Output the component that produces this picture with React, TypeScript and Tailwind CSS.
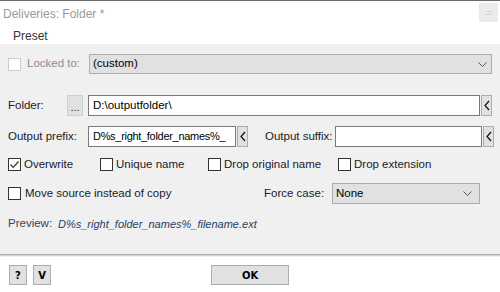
import React from "react";

const font = { fontFamily: '"Liberation Sans", Arial, sans-serif' };

function Chevron({ className = "" }: { className?: string }) {
  return (
    <svg width="9" height="5" viewBox="0 0 9 5" className={className}>
      <path d="M0.5 0.5 L4.5 4.5 L8.5 0.5" fill="none" stroke="#555" strokeWidth="1" />
    </svg>
  );
}

function LeftBtn() {
  return (
    <div className="w-[11px] h-[21px] ml-px shrink-0 bg-[#e1e1e1] border border-[#adadad] flex items-center justify-center">
      <svg width="6" height="11" viewBox="0 0 6 11">
        <path d="M5 1 L1 5.5 L5 10" fill="none" stroke="#111" strokeWidth="1.2" />
      </svg>
    </div>
  );
}

function Check({ checked = false, disabled = false }: { checked?: boolean; disabled?: boolean }) {
  return (
    <div
      className={`w-[13px] h-[13px] bg-white border flex items-center justify-center shrink-0 ${
        disabled ? "border-[#cccccc]" : "border-[#333333]"
      }`}
    >
      {checked && (
        <svg width="11" height="11" viewBox="0 0 11 11">
          <path d="M1.5 5.5 L4.2 8.3 L9.5 2.5" fill="none" stroke="#333" strokeWidth="1.2" />
        </svg>
      )}
    </div>
  );
}

export default function App() {
  return (
    <div className="w-[500px] h-[292px] bg-white border-t border-[#6b6b6b] text-[11.5px] text-[#1a1a2a] overflow-hidden flex flex-col whitespace-nowrap" style={font}>
      {/* title bar */}
      <div className="h-[26px] flex items-start justify-between">
        <span className="pl-[3px] pt-[4px] text-[#9a9a9a] text-[12px]">Deliveries: Folder *</span>
        <div className="mt-[2px] mr-[2px] w-[19px] h-[19px] bg-[#ebebeb] flex items-center justify-center">
          <div className="w-[7px] h-[4px] border-t border-b border-[#d8d8d8]" />
        </div>
      </div>

      {/* menu */}
      <div className="h-[17px] pl-[13px] flex items-start">
        <span className="text-[#333] text-[12px]">Preset</span>
      </div>

      {/* panel */}
      <div className="h-[210px] bg-[#f0f0f0] px-[8px] pt-[10px] flex flex-col">
        <div className="h-[20px] flex items-center">
          <Check disabled />
          <span className="ml-[6px] text-[#8d8d8d]">Locked to:</span>
          <div className="ml-auto w-[403px] h-[20px] bg-[#e1e1e1] border border-[#adadad] flex items-center pl-[3px] pr-[4px]">
            <span className="text-black">(custom)</span>
            <Chevron className="ml-auto" />
          </div>
        </div>

        <div className="h-[21px] mt-[21px] flex items-center">
          <span className="w-[59px] shrink-0">Folder:</span>
          <div className="w-[16px] h-[21px] shrink-0 bg-[#e1e1e1] border border-[#cfcfcf] flex items-end justify-center pb-[2px] text-[11px] leading-none text-[#333]">...</div>
          <div className="ml-[5px] w-[392px] h-[21px] shrink-0 bg-white border border-[#7a7a7a] flex items-center pl-[4px] text-black">D:\outputfolder\</div>
          <LeftBtn />
        </div>

        <div className="h-[21px] mt-[10px] flex items-center">
          <span className="w-[80px] shrink-0">Output prefix:</span>
          <div className="w-[148px] h-[21px] shrink-0 bg-white border border-[#7a7a7a] flex items-center pl-[4px] text-black text-[11px] tracking-[-0.3px]">D%s_right_folder_names%_</div>
          <LeftBtn />
          <span className="ml-[17px] w-[70px] shrink-0">Output suffix:</span>
          <div className="w-[147px] h-[21px] shrink-0 bg-white border border-[#7a7a7a]" />
          <LeftBtn />
        </div>

        <div className="h-[13px] mt-[11px] flex items-center">
          <div className="w-[92px] shrink-0 flex items-center">
            <Check checked />
            <span className="ml-[3px]">Overwrite</span>
          </div>
          <div className="w-[108px] shrink-0 flex items-center">
            <Check />
            <span className="ml-[3px]">Unique name</span>
          </div>
          <div className="w-[130px] shrink-0 flex items-center">
            <Check />
            <span className="ml-[3px]">Drop original name</span>
          </div>
          <div className="flex items-center">
            <Check />
            <span className="ml-[3px]">Drop extension</span>
          </div>
        </div>

        <div className="h-[21px] mt-[12px] flex items-center">
          <div className="w-[256px] shrink-0 flex items-center">
            <Check />
            <span className="ml-[4px]">Move source instead of copy</span>
          </div>
          <span className="w-[68px] shrink-0">Force case:</span>
          <div className="w-[148px] h-[21px] shrink-0 bg-[#e1e1e1] border border-[#adadad] flex items-center pl-[3px] pr-[7px]">
            <span className="text-black">None</span>
            <Chevron className="ml-auto" />
          </div>
        </div>

        <div className="mt-[12px] h-[16px] flex items-center">
          <span className="w-[50px] shrink-0 text-[#3a4450]">Preview:</span>
          <span className="italic text-[#1f3f66] text-[11px]">D%s_right_folder_names%_filename.ext</span>
        </div>
      </div>

      {/* shadow */}
      <div className="h-[3px] bg-gradient-to-b from-[#a3a3a3] to-white" />

      {/* bottom buttons */}
      <div className="flex items-center pt-[8px] pl-[9px]" style={{ fontFamily: '"DejaVu Sans", sans-serif' }}>
        <div className="w-[18px] h-[20px] bg-[#e1e1e1] border border-[#adadad] flex items-center justify-center text-[10px] font-bold text-black">?</div>
        <div className="ml-[6px] w-[18px] h-[20px] bg-[#e1e1e1] border border-[#adadad] flex items-center justify-center text-[10px] font-bold text-black">V</div>
        <div className="ml-[160px] w-[78px] h-[20px] bg-[#e1e1e1] border border-[#adadad] flex items-center justify-center text-[10px] font-bold text-black">OK</div>
      </div>
    </div>
  );
}
